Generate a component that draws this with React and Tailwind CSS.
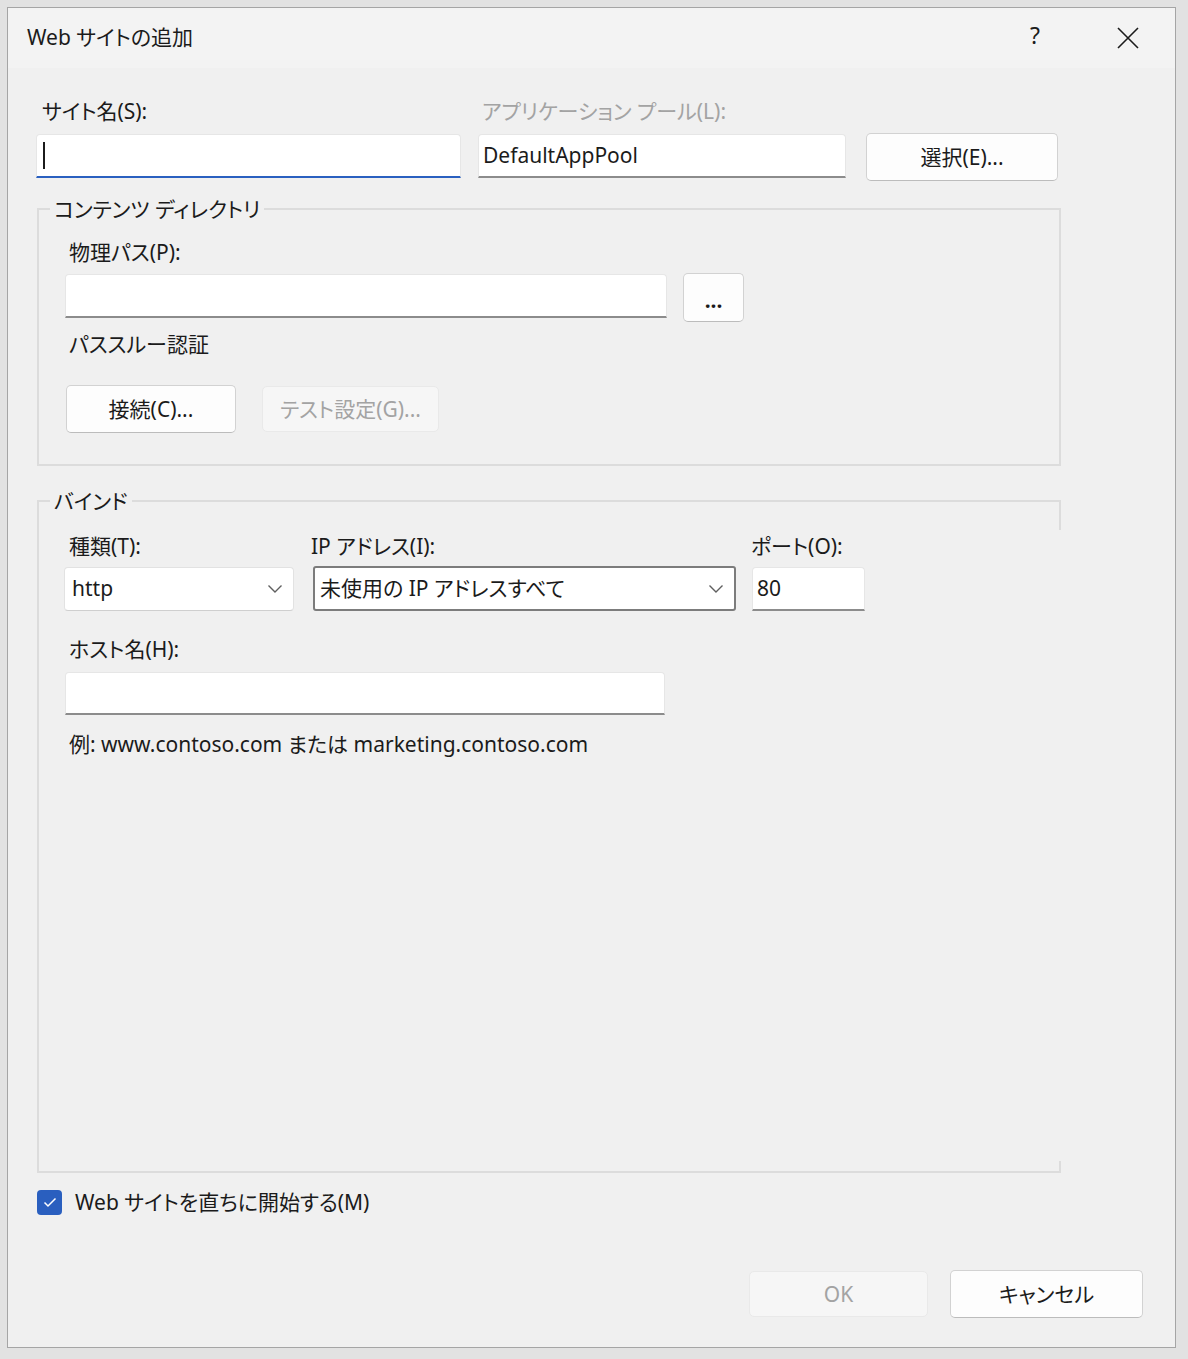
import React from 'react';

const jp = "font-['Noto_Sans','Noto_Sans_CJK_JP',sans-serif] [font-feature-settings:'palt']";

const Chevron = () => (
  <svg width="16" height="10" viewBox="0 0 16 10" className="shrink-0">
    <polyline points="1.5,1.5 8,8 14.5,1.5" fill="none" stroke="#5f5f5f" strokeWidth="1.4" />
  </svg>
);

const Button = ({ children, className = '', disabled = false }) => (
  <button
    className={`flex items-center justify-center rounded-[5px] border text-[21px] leading-none ${
      disabled
        ? 'bg-[#f6f6f6] border-[#e9e9e9] text-[#a3a3a3]'
        : 'bg-[#fdfdfd] border-[#d2d2d2] border-b-[#bcbcbc] text-[#1b1b1b]'
    } ${className}`}
  >
    {children}
  </button>
);

const TextBox = ({ className = '', children }) => (
  <div className={`bg-white border border-[#e6e6e6] border-b-2 border-b-[#8c8c8c] rounded-t-[4px] ${className}`}>
    {children}
  </div>
);

export default function App() {
  return (
    <div className={`w-[1188px] h-[1359px] bg-[#e2e2e2] pt-[7px] pl-[7px] text-[#1b1b1b] ${jp}`}>
      <div className="w-[1169px] h-[1341px] border border-[#a5a5a5] bg-[#f0f0f0] flex flex-col">
        {/* Title bar */}
        <div className="h-[60px] bg-[#f3f3f3] flex items-center pl-[19px] pr-[36px]">
          <span className="text-[21px]">Web サイトの追加</span>
          <span className="ml-auto text-[23px] leading-none mr-[77px] -mt-[6px]">?</span>
          <svg width="22" height="22" viewBox="0 0 22 22">
            <path d="M1 1 L21 21 M21 1 L1 21" stroke="#1b1b1b" strokeWidth="1.6" />
          </svg>
        </div>

        {/* Body */}
        <div className="pl-[28px] pt-[29px] flex flex-col">
          <div className="flex h-[28px] text-[21px] leading-[28px]">
            <div className="w-[442px] pl-[6px]">サイト名(S):</div>
            <div className="pl-[4px] text-[#a3a3a3]">アプリケーション プール(L):</div>
          </div>
          <div className="flex items-start h-[44px] mt-[9px]">
            <div className="w-[425px] h-[44px] bg-white border border-[#e6e6e6] border-b-2 border-b-[#2a60c0] rounded-t-[4px] flex items-center pl-[6px]">
              <div className="w-[2px] h-[27px] bg-[#1b1b1b]" />
            </div>
            <TextBox className="ml-[17px] w-[368px] h-[44px] bg-[#f9f9f9] flex items-center pl-[4px] text-[21px]">
              DefaultAppPool
            </TextBox>
            <Button className="ml-[20px] -mt-[1px] w-[192px] h-[48px]">選択(E)...</Button>
          </div>

          {/* Content directory */}
          <fieldset className="mt-[17px] ml-[1px] w-[1024px] h-[271px] border-2 border-[#dcdcdc] pl-[26px] pb-0">
            <legend className="-ml-[15px] px-[4px] text-[21px] leading-[28px]">コンテンツ ディレクトリ</legend>
            <div className="mt-[15px] pl-[4px] text-[21px] leading-[28px]">物理パス(P):</div>
            <div className="flex items-start mt-[8px] h-[44px]">
              <TextBox className="w-[602px] h-[44px]" />
              <Button className="ml-[16px] -mt-[1px] w-[61px] h-[49px] text-[18px] font-bold pt-[6px]">...</Button>
            </div>
            <div className="mt-[12px] pl-[4px] text-[21px] leading-[28px]">パススルー認証</div>
            <div className="flex items-start mt-[27px]">
              <Button className="ml-[1px] w-[170px] h-[48px]">接続(C)...</Button>
              <Button disabled className="ml-[26px] mt-[1px] w-[177px] h-[46px]">テスト設定(G)...</Button>
            </div>
          </fieldset>

          {/* Binding */}
          <div className="relative mt-[21px] ml-[1px] w-[1024px]">
            <fieldset className="w-[1024px] h-[686px] border-2 border-r-0 border-[#dcdcdc] pl-[25px]">
              <legend className="-ml-[14px] px-[4px] text-[21px] leading-[28px]">バインド</legend>
              <div className="flex mt-[17px] h-[28px] text-[21px] leading-[28px]">
                <div className="w-[247px] pl-[5px]">種類(T):</div>
                <div className="w-[440px]">IP アドレス(I):</div>
                <div>ポート(O):</div>
              </div>
              <div className="flex items-start mt-[7px] h-[44px]">
                <div className="w-[230px] h-[44px] bg-white border border-[#e2e2e2] border-b-[#cfcfcf] rounded-[4px] flex items-center pl-[7px] pr-[10px] text-[21px]">
                  <span className="flex-1">http</span>
                  <Chevron />
                </div>
                <div className="ml-[19px] -mt-[1px] w-[423px] h-[45px] bg-white border-2 border-[#7c7c7c] rounded-[3px] flex items-center pl-[5px] pr-[10px] text-[21px]">
                  <span className="flex-1">未使用の IP アドレスすべて</span>
                  <Chevron />
                </div>
                <TextBox className="ml-[16px] w-[113px] h-[44px] flex items-center pl-[4px] text-[21px]">80</TextBox>
              </div>
              <div className="mt-[24px] pl-[5px] text-[21px] leading-[28px]">ホスト名(H):</div>
              <TextBox className="mt-[9px] ml-[1px] w-[600px] h-[43px]" />
              <div className="mt-[15px] pl-[5px] text-[21px] leading-[28px]">
                例: www.contoso.com または marketing.contoso.com
              </div>
            </fieldset>
            <span className="absolute right-0 top-[13px] w-[2px] h-[30px] bg-[#dcdcdc]" />
            <span className="absolute right-0 bottom-0 w-[2px] h-[12px] bg-[#dcdcdc]" />
          </div>

          {/* Start checkbox */}
          <div className="flex items-center mt-[15px] ml-[1px]">
            <div className="w-[25px] h-[25px] rounded-[4px] bg-[#2a5fbf] flex items-center justify-center">
              <svg width="14" height="11" viewBox="0 0 14 11">
                <polyline points="1.5,5.5 5,9 12.5,1.5" fill="none" stroke="white" strokeWidth="1.5" />
              </svg>
            </div>
            <span className="ml-[13px] text-[21px] leading-[28px]">Web サイトを直ちに開始する(M)</span>
          </div>

          {/* Footer buttons */}
          <div className="flex items-start mt-[54px]">
            <Button disabled className="ml-[713px] mt-[1px] w-[179px] h-[46px]">OK</Button>
            <Button className="ml-[22px] w-[193px] h-[48px]">キャンセル</Button>
          </div>
        </div>
      </div>
    </div>
  );
}
